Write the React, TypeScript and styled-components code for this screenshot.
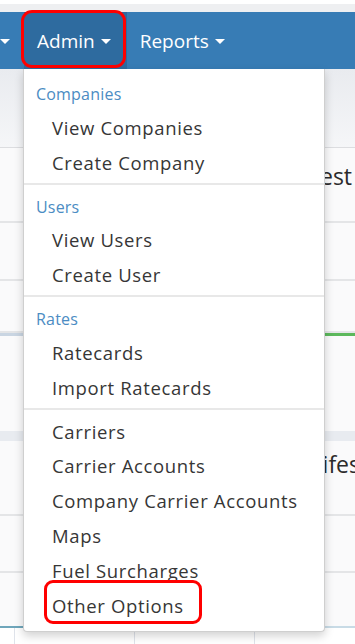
import styled, { createGlobalStyle } from 'styled-components'

const GlobalStyle = createGlobalStyle`
  body {
    margin: 0;
    background: #ffffff;
    font-family: "Open Sans", "Noto Sans", sans-serif;
  }
`

const menuGroups = [
  { title: 'Companies', items: ['View Companies', 'Create Company'] },
  { title: 'Users', items: ['View Users', 'Create User'] },
  { title: 'Rates', items: ['Ratecards', 'Import Ratecards'] },
  {
    title: '',
    items: ['Carriers', 'Carrier Accounts', 'Company Carrier Accounts', 'Maps', 'Fuel Surcharges', 'Other Options'],
  },
]

const App = () => {
  return (
    <Page>
      <GlobalStyle />
      <TopStrip />
      <Navbar>
        <NavItem $cut>
          <Caret />
        </NavItem>
        <NavItem $active $marked>
          Admin <Caret />
        </NavItem>
        <NavItem>
          Reports <Caret />
        </NavItem>
      </Navbar>

      <Board>
        <HeaderBand />
        <Row $height={73}>
          <RowText $indent={287} $top={12}>Latest</RowText>
        </Row>
        <Row $height={56} />
        <Row $height={50} />
        <ProgressLine>
          <ProgressFill />
        </ProgressLine>
        <Row $height={95} $plain />
        <Band />
        <Row $height={73}>
          <RowText $indent={275} $top={7}>Manifest</RowText>
        </Row>
        <Row $height={55} />
        <Row $height={53} $plain />
        <BottomLine />
        <Cells>
          <Cell />
          <Cell />
          <Cell />
          <Cell />
        </Cells>
      </Board>

      <Menu>
        {menuGroups.map((group, gi) => (
          <MenuGroup key={gi}>
            {gi > 0 && <Divider />}
            {group.title && <MenuHeader>{group.title}</MenuHeader>}
            {group.items.map((item) => (
              <MenuItem key={item} $marked={item === 'Other Options'}>
                {item}
              </MenuItem>
            ))}
          </MenuGroup>
        ))}
      </Menu>
    </Page>
  )
}

export const Page = styled.div`
  position: relative;
  width: 355px;
  height: 644px;
  overflow: hidden;
  background: #ffffff;
`

export const TopStrip = styled.div`
  height: 12px;
  background: linear-gradient(#ffffff 0 4px, #eeeff1 4px);
`

export const Navbar = styled.div`
  display: flex;
  height: 57px;
  background: #377cb5;
`

export const NavItem = styled.div<{ $active?: boolean; $marked?: boolean; $cut?: boolean }>`
  position: relative;
  display: flex;
  align-items: center;
  gap: 6px;
  padding: ${(p) => (p.$cut ? '0 14px 0 0' : '0 16px 0 13px')};
  color: #ffffff;
  font-size: 19px;
  background: ${(p) => (p.$active ? '#2e6b9f' : 'transparent')};

  ${(p) =>
    p.$marked &&
    `
    &::after {
      content: '';
      position: absolute;
      left: -3px;
      right: 1px;
      top: -2px;
      bottom: 1px;
      border: 3px solid #ff0000;
      border-radius: 11px;
    }
  `}
`

export const Caret = styled.span`
  display: inline-block;
  margin-top: 2px;
  border-top: 5px solid #ffffff;
  border-left: 5px solid transparent;
  border-right: 5px solid transparent;
`

export const Board = styled.div`
  display: flex;
  flex-flow: column;
  background: #fafafb;
`

export const HeaderBand = styled.div`
  height: 78px;
  border-bottom: 1px solid #dcdde0;
  background: linear-gradient(#e9ebef, #f5f6f8);
`

export const Row = styled.div<{ $height: number; $plain?: boolean }>`
  display: flex;
  align-items: flex-start;
  height: ${(p) => p.$height}px;
  border-bottom: ${(p) => (p.$plain ? 'none' : '2px solid #e4e5e7')};
  background: #fafafb;
`

export const RowText = styled.span<{ $indent: number; $top: number }>`
  padding: ${(p) => p.$top}px 0 0 ${(p) => p.$indent}px;
  white-space: nowrap;
  font-size: 23px;
  line-height: 32px;
  color: #2b2b2b;
`

export const ProgressLine = styled.div`
  display: flex;
  justify-content: flex-end;
  height: 3px;
  background: #c9d5e2;
`

export const ProgressFill = styled.div`
  width: 40px;
  height: 100%;
  background: #5cb85c;
`

export const Band = styled.div`
  height: 10px;
  background: #e8ebf0;
`

export const BottomLine = styled.div`
  height: 2px;
  background: linear-gradient(90deg, #6fa6bb 0 43px, #c8dbe6 43px);
`

export const Cells = styled.div`
  display: grid;
  grid-template-columns: 15px 120px 120px 1fr;
  height: 40px;
`

export const Cell = styled.div`
  border-right: 1px solid #dfe3ea;
  background: #ffffff;

  &:last-child {
    border-right: none;
  }
`

export const Menu = styled.div`
  position: absolute;
  top: 69px;
  left: 23px;
  width: 300px;
  padding: 9px 0 8px;
  background: #ffffff;
  border: 1px solid #cfcfcf;
  border-top: none;
  border-radius: 0 0 4px 4px;
  box-shadow: 0 4px 10px rgba(0, 0, 0, 0.18);
`

export const MenuGroup = styled.div`
  display: flex;
  flex-flow: column;
`

export const Divider = styled.div`
  height: 2px;
  margin: 3px 0 4px;
  background: #e8e8e8;
`

export const MenuHeader = styled.div`
  display: flex;
  align-items: center;
  height: 32px;
  padding-left: 12px;
  font-size: 16px;
  letter-spacing: 0.2px;
  color: #4b8cc3;

  &:not(:first-child) {
    margin-top: 2px;
  }
`

export const MenuItem = styled.div<{ $marked?: boolean }>`
  position: relative;
  display: flex;
  align-items: center;
  height: 34.8px;
  padding-left: 28px;
  font-size: 18.5px;
  letter-spacing: 0.65px;
  color: #363636;
  white-space: nowrap;

  ${(p) =>
    p.$marked &&
    `
    &::after {
      content: '';
      position: absolute;
      left: 20px;
      width: 152px;
      top: -8px;
      bottom: -1px;
      border: 3px solid #ff0000;
      border-radius: 9px;
    }
  `}
`

export default App
